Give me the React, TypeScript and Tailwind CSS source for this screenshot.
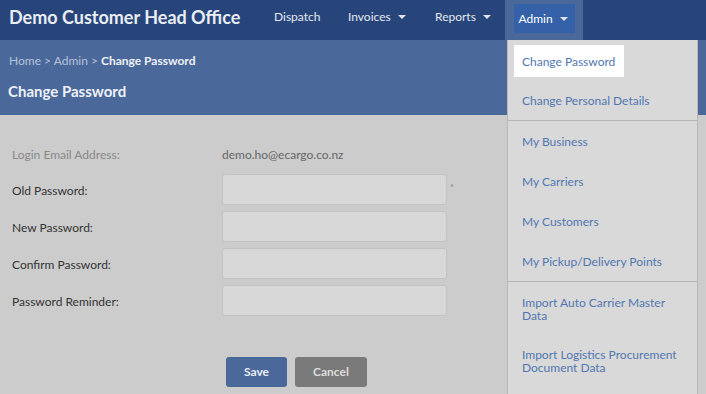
import React from "react";

const Caret = () => (
  <span className="ml-[7px] inline-block w-0 h-0 border-l-[4px] border-r-[4px] border-t-[4px] border-l-transparent border-r-transparent border-t-[#dfe6f1]" />
);

const menu: { label: string[]; h: string; active?: boolean; divider?: boolean }[] = [
  { label: ["Change Password"], h: "h-[40px]", active: true },
  { label: ["Change Personal Details"], h: "h-[39px]", divider: true },
  { label: ["My Business"], h: "h-[40px]" },
  { label: ["My Carriers"], h: "h-[40px]" },
  { label: ["My Customers"], h: "h-[40px]" },
  { label: ["My Pickup/Delivery Points"], h: "h-[40px]", divider: true },
  { label: ["Import Auto Carrier Master", "Data"], h: "h-[53px]" },
  { label: ["Import Logistics Procurement", "Document Data"], h: "h-[52px]" },
];

export default function App() {
  return (
    <div
      className="relative w-[706px] h-[394px] overflow-hidden bg-[#cccccc]"
      style={{ fontFamily: "Lato, 'Noto Sans', sans-serif" }}
    >
      {/* Top nav */}
      <div className="h-[40px] bg-[#27457a] flex items-stretch">
        <div className="pl-[9px] w-[265px] flex items-center text-[18px] font-bold text-[#e9edf4] leading-none pb-[7px]">
          Demo Customer Head Office
        </div>
        <div className="flex items-stretch text-[12px] text-[#e3e8f1]">
          <div className="ml-[9px] w-[74px] flex items-center pb-[6px]">Dispatch</div>
          <div className="w-[87px] flex items-center pb-[6px]">
            Invoices
            <Caret />
          </div>
          <div className="w-[70px] flex items-center pb-[6px]">
            Reports
            <Caret />
          </div>
          <div className="w-[78px] bg-[#4a6899] flex justify-center pt-[4px] pb-[7px]">
            <div className="w-[61px] bg-[#3461a8] flex items-center pl-[5px] text-white">
              Admin
              <Caret />
            </div>
          </div>
        </div>
      </div>

      {/* Sub header */}
      <div className="h-[75px] bg-[#4a6899] pl-[9px] pt-[13px]">
        <div className="text-[12px] leading-[16px] text-[#b6c3d9]">
          Home &gt; Admin &gt; <span className="font-bold text-[#eef2f8]">Change Password</span>
        </div>
        <div className="mt-[13px] text-[15px] font-bold leading-[18px] text-[#eef2f8] -ml-[1px]">
          Change Password
        </div>
      </div>

      {/* Form */}
      <div className="pl-[12px] pt-[26px] text-[12px]">
        <div className="grid grid-cols-[210px_225px_auto] items-center">
          <div className="h-[28px] flex items-center text-[#888888]">Login Email Address:</div>
          <div className="h-[28px] flex items-center text-[#666666]">demo.ho@ecargo.co.nz</div>
          <div />
        </div>
        <div className="mt-[5px] flex flex-col gap-[6px]">
          {["Old Password:", "New Password:", "Confirm Password:", "Password Reminder:"].map((l, i) => (
            <div key={l} className="grid grid-cols-[210px_225px_auto] items-center">
              <div className="text-[#333333] pt-[2px]">{l}</div>
              <div className="h-[31px] rounded-[3px] bg-[#d8d8d8] border border-[#c2c2c2]" />
              <div className="pl-[3px] text-[9px] text-[#888888] -mt-[4px]">{i === 0 ? "*" : ""}</div>
            </div>
          ))}
        </div>
        <div className="mt-[41px] ml-[214px] flex gap-[8px]">
          <div className="w-[61px] h-[30px] rounded-[3px] bg-[#4a6899] text-[#e8eef7] font-bold text-[12px] flex items-center justify-center">
            Save
          </div>
          <div className="w-[72px] h-[30px] rounded-[3px] bg-[#7a7a7a] text-[#dddddd] font-bold text-[12px] flex items-center justify-center">
            Cancel
          </div>
        </div>
      </div>

      {/* Dropdown menu */}
      <div className="absolute left-[507px] top-[40px] w-[191px] h-[360px] bg-[#d9d9d9] border-l border-r border-[#b9b9b9] pt-[1px] text-[12px] text-[#5177b1]">
        {menu.map((m, i) => (
          <React.Fragment key={i}>
            <div className={m.h + " px-[6px] flex items-center"}>
              <div
                className={
                  (m.active ? "bg-white w-[110px] h-[32px] " : "") +
                  "px-[8px] leading-[13px] flex items-center"
                }
              >
                <div>
                  {m.label.map((t) => (
                    <div key={t}>{t}</div>
                  ))}
                </div>
              </div>
            </div>
            {m.divider && <div className="h-[1px] bg-[#b5b5b5]" />}
          </React.Fragment>
        ))}
      </div>
    </div>
  );
}
